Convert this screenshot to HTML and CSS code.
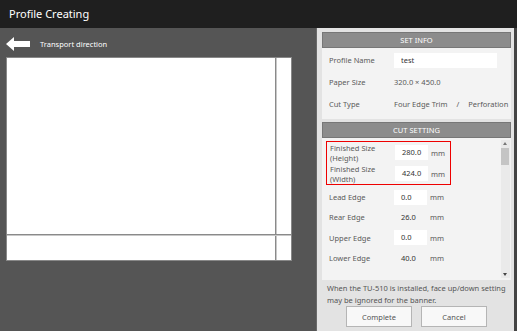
FILE: index.html
```html
<!DOCTYPE html>
<html lang="en">
<head>
  <meta charset="UTF-8" />
  <title>Profile Creating</title>
  <link rel="stylesheet" href="styles.css">
</head>
<body>
  <div class="titlebar">Profile Creating</div>
  <div class="main">
    <div class="stage">
      <div class="direction">
        <svg class="arrow" width="24" height="14" viewBox="0 0 24 14">
          <polygon points="0,7 8,0 8,4 24,4 24,10 8,10 8,14" fill="#fff"/>
        </svg>
        <span>Transport direction</span>
      </div>
      <div class="paper">
        <div class="trim-v"></div>
        <div class="trim-h"></div>
      </div>
    </div>

    <div class="panel">
      <div class="section">
        <div class="section-head">SET INFO</div>
        <div class="section-body info">
          <div class="row">
            <span class="label">Profile Name</span>
            <input class="name-input" type="text" value="test">
          </div>
          <div class="row">
            <span class="label">Paper Size</span>
            <span>320.0 &times; 450.0</span>
          </div>
          <div class="row">
            <span class="label">Cut Type</span>
            <span>Four Edge Trim</span>
            <span class="slash">/</span>
            <span>Perforation</span>
          </div>
        </div>
      </div>

      <div class="section">
        <div class="section-head">CUT SETTING</div>
        <div class="section-body cut">
          <div class="cut-list">
            <div class="highlight">
              <div class="row tall">
                <span class="label">Finished Size<br>(Height)</span>
                <span class="num boxed">280.0</span>
                <span class="unit">mm</span>
              </div>
              <div class="row tall">
                <span class="label">Finished Size<br>(Width)</span>
                <span class="num boxed">424.0</span>
                <span class="unit">mm</span>
              </div>
            </div>
            <div class="row">
              <span class="label">Lead Edge</span>
              <span class="num boxed">0.0</span>
              <span class="unit">mm</span>
            </div>
            <div class="row">
              <span class="label">Rear Edge</span>
              <span class="num">26.0</span>
              <span class="unit">mm</span>
            </div>
            <div class="row">
              <span class="label">Upper Edge</span>
              <span class="num boxed">0.0</span>
              <span class="unit">mm</span>
            </div>
            <div class="row">
              <span class="label">Lower Edge</span>
              <span class="num">40.0</span>
              <span class="unit">mm</span>
            </div>
          </div>
          <div class="scrollbar">
            <span class="scroll-up"></span>
            <span class="thumb"></span>
            <span class="scroll-down"></span>
          </div>
        </div>
      </div>

      <p class="note">When the TU-510 is installed, face up/down setting may be ignored for the banner.</p>
      <div class="buttons">
        <button>Complete</button>
        <button>Cancel</button>
      </div>
    </div>
  </div>
</body>
</html>
```

FILE: styles.css
```css
* {
  box-sizing: border-box;
}
body {
  margin: 0;
  width: 517px;
  height: 331px;
  overflow: hidden;
  background: #555;
  font-family: 'Noto Sans', sans-serif;
  font-size: 7.5px;
  color: #5a5a5a;
}
.titlebar {
  height: 28px;
  line-height: 28px;
  padding-left: 9px;
  background: #1f1f1f;
  color: #fff;
  font-size: 11px;
}
.main {
  display: flex;
  height: 303px;
}
.stage {
  width: 313px;
  padding: 9px 0 0 6px;
}
.direction {
  display: flex;
  align-items: center;
  gap: 10px;
  height: 14px;
  color: #fff;
  font-size: 7.5px;
}
.paper {
  position: relative;
  width: 286px;
  height: 204px;
  margin-top: 6px;
  background: #fff;
  border: 1px solid #888;
}
.trim-v {
  position: absolute;
  left: 268px;
  top: 0;
  bottom: 0;
  width: 1px;
  background: #8a8a8a;
  box-shadow: 1px 0 0 #c8c8c8;
}
.trim-h {
  position: absolute;
  left: 0;
  right: 0;
  top: 176px;
  height: 1px;
  background: #8a8a8a;
  box-shadow: 0 1px 0 #c8c8c8;
}
.panel {
  width: 201px;
  margin-left: 3px;
  padding: 4px 3px 0 5px;
  background: #e3e3e3;
  border-left: 1px solid #6a6a6a;
  border-right: 3px solid #444;
  display: flex;
  flex-direction: column;
}
.section {
  margin-bottom: 3px;
}
.section-head {
  height: 16px;
  line-height: 14px;
  text-align: center;
  background: #8c8c8c;
  border: 1px solid #777;
  color: #fff;
  font-size: 7.5px;
}
.section-body {
  background: #f3f3f3;
}
.info {
  height: 71px;
  padding: 1px 0 0 7px;
}
.row {
  display: flex;
  align-items: center;
  height: 22px;
}
.label {
  width: 65px;
  line-height: 10px;
}
.name-input {
  width: 103px;
  height: 15px;
  border: none;
  background: #fff;
  font-family: inherit;
  font-size: 7.5px;
  color: #333;
  padding: 0 0 0 7px;
}
.slash {
  margin: 0 9px;
}
.cut {
  height: 142px;
  display: flex;
}
.cut-list {
  flex: 1;
  padding: 3px 0 0 4px;
}
.highlight {
  width: 125px;
  padding: 0 0 0 3px;
  border: 1px solid #e00;
}
.tall {
  height: 21px;
}
.cut-list > .row {
  height: 20.3px;
  padding-left: 3px;
}
.cut-list > .highlight + .row {
  margin-top: 2px;
}
.num {
  width: 33px;
  height: 15px;
  line-height: 15px;
  padding-left: 7px;
  color: #333;
}
.boxed {
  background: #fff;
}
.unit {
  margin-left: 3px;
}
.scrollbar {
  width: 9px;
  margin: 2px 1px 2px 0;
  position: relative;
  background: #eaeaea;
}
.scroll-up,
.scroll-down {
  position: absolute;
  left: 2px;
  width: 0;
  height: 0;
  border-left: 2.5px solid transparent;
  border-right: 2.5px solid transparent;
}
.scroll-up {
  top: 2px;
  border-bottom: 3px solid #777;
}
.scroll-down {
  bottom: 2px;
  border-top: 3px solid #444;
}
.thumb {
  position: absolute;
  top: 8px;
  left: 0;
  width: 8px;
  height: 17px;
  background: #c4c4c4;
}
.section + .section {
  margin-bottom: 0;
}
.note {
  margin: 2px 0 0 5px;
  line-height: 12px;
  font-size: 7.5px;
  color: #555;
}
.buttons {
  display: flex;
  justify-content: center;
  gap: 9px;
  margin-top: 0;
}
button {
  width: 66px;
  height: 21px;
  background: #f8f8f8;
  border: 1px solid #b5b5b5;
  font-family: inherit;
  font-size: 7.5px;
  color: #555;
}
```
